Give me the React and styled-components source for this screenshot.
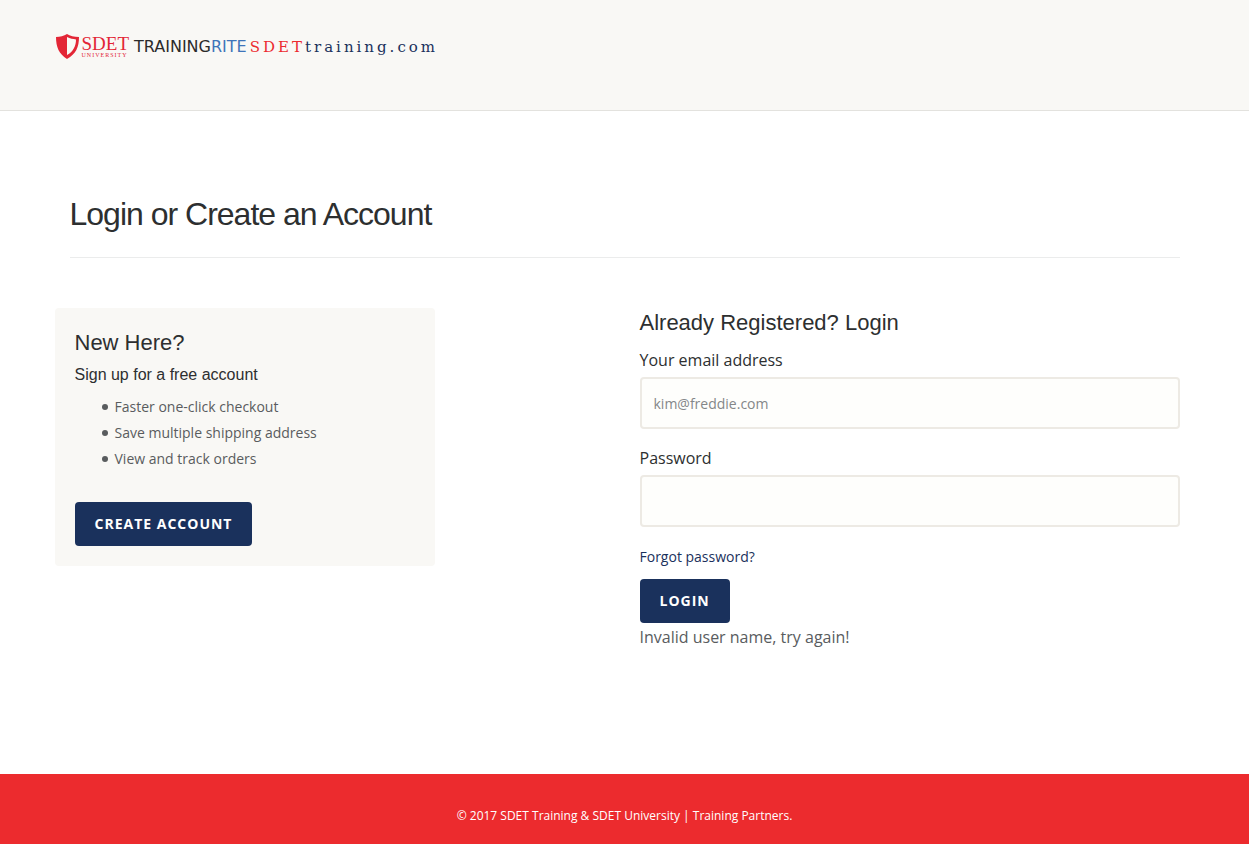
import React from "react";
import styled, { createGlobalStyle } from "styled-components";

const GlobalStyle = createGlobalStyle`
  *, *::before, *::after { box-sizing: border-box; }
  body {
    margin: 0;
    background: #fff;
    color: #595c5e;
    font: 16px/24px "Open Sans", sans-serif;
  }
  h1, h2, h3, p, ul { margin: 0; }
`;

const Page = styled.div`
  display: flex;
  flex-direction: column;
  min-height: 100vh;
`;

const Container = styled.div`
  width: 100%;
  max-width: 1140px;
  margin: 0 auto;
`;

const Header = styled.header`
  padding: 32px 0 48px;
  background: #f9f8f5;
  border-bottom: 1px solid #e3e2de;
`;

const Brand = styled.a`
  display: flex;
  align-items: center;
  width: fit-content;
  height: 30px;
  color: #1a315c;
  text-decoration: none;
  white-space: nowrap;
`;

const Shield = styled.svg`
  width: 24px;
  height: 26px;
  margin-right: 3px;
`;

const University = styled.span`
  display: flex;
  flex-direction: column;
  margin-right: 5px;
  color: #e32636;
  font-family: "Liberation Serif", serif;
`;

const UniversityName = styled.span`
  font-size: 19px;
  line-height: 17px;
`;

const UniversityTag = styled.span`
  font-size: 6px;
  line-height: 7px;
  letter-spacing: 1px;
`;

const TrainingRite = styled.span`
  margin-right: 3px;
  color: #2b2b2b;
  font: 16px/24px "DejaVu Sans", sans-serif;
`;

const Rite = styled.span`
  color: #3e74b9;
`;

const Domain = styled.span`
  font: 15px/24px "DejaVu Serif", serif;
  letter-spacing: 3px;
`;

const DomainAccent = styled.span`
  color: #ec2b2e;
`;

const Main = styled.main`
  flex: 1;
  padding: 80px 0;
`;

const PageTitle = styled.h1`
  margin: 0 15px 50px;
  padding: 3px 0 23px;
  border-bottom: 1px solid #ebecec;
  color: #2d2f30;
  font: 400 32px/40px "Liberation Sans", sans-serif;
  letter-spacing: -1px;
`;

const Columns = styled.div`
  display: grid;
  grid-template-columns: 1fr 1fr;
  align-items: start;
`;

const Card = styled.section`
  width: calc(100% * 2 / 3);
  padding: 20px;
  background: #f9f8f5;
  border-radius: 4px;
`;

const SectionTitle = styled.h2`
  color: #2d2f30;
  font: 400 22px/30px "Liberation Sans", sans-serif;
`;

const Subtitle = styled.h3`
  padding: 7px 0 9px;
  color: #2d2f30;
  font: 400 16px/20px "Liberation Sans", sans-serif;
`;

const Benefits = styled.ul`
  margin-bottom: 30px;
  padding-left: 27px;
  list-style: none;
  font-size: 14px;
  line-height: 26px;
`;

const Benefit = styled.li`
  display: flex;
  align-items: center;
  gap: 7px;
  &::before {
    content: "";
    width: 6px;
    height: 6px;
    border-radius: 50%;
    background: currentColor;
  }
`;

const Button = styled.button`
  display: block;
  height: 44px;
  padding: 0 20px;
  border: 0;
  border-radius: 4px;
  background: #1a315c;
  color: #fff;
  font: 700 14px/24px "Open Sans", sans-serif;
  letter-spacing: 1px;
  text-transform: uppercase;
  cursor: pointer;
`;

const LoginForm = styled.form`
  padding: 0 15px;
`;

const Fields = styled.div`
  padding-top: 10px;
`;

const Field = styled.div`
  display: flex;
  flex-direction: column;
  gap: 5px;
  margin-bottom: 17px;
`;

const Label = styled.label`
  color: #2d2f30;
`;

const Input = styled.input`
  width: 100%;
  height: 52px;
  padding: 0 12px;
  border: 2px solid #edeae4;
  border-radius: 4px;
  background: #fefefc;
  color: #2d2f30;
  font: 14px/24px "Open Sans", sans-serif;
  &::placeholder { color: #848789; opacity: 1; }
`;

const ForgotLink = styled.a`
  display: inline-block;
  margin-bottom: 10px;
  color: #1a315c;
  font-size: 14px;
  text-decoration: none;
`;

const Message = styled.p`
  line-height: 28px;
`;

const Footer = styled.footer`
  padding: 30px 0 16px;
  background: #ec2b2e;
  color: #fff;
  font-size: 12px;
  text-align: center;
`;

function TextField({ id, label, ...rest }) {
  return (
    <Field>
      <Label htmlFor={id}>{label}</Label>
      <Input id={id} name={id} {...rest} />
    </Field>
  );
}

export default function App() {
  return (
    <>
      <GlobalStyle />
      <Page>
        <Header>
          <Container>
            <Brand href="#">
              <Shield viewBox="0 0 24 26" aria-hidden="true">
                <path
                  d="M1 3C5 3 9 2 12 0c3 2 7 3 12 3 0 10-3 17-12 22C4 20 1 13 1 3Z"
                  fill="#e32636"
                />
                <path
                  d="M12 3c3 1.500 6 2 9 2.500C21 12 18 18 12 21Z"
                  fill="#f9f8f5"
                />
              </Shield>
              <University>
                <UniversityName>SDET</UniversityName>
                <UniversityTag>UNIVERSITY</UniversityTag>
              </University>
              <TrainingRite>
                TRAINING<Rite>RITE</Rite>
              </TrainingRite>
              <Domain>
                <DomainAccent>SDET</DomainAccent>training.com
              </Domain>
            </Brand>
          </Container>
        </Header>
        <Main>
          <Container>
            <PageTitle>Login or Create an Account</PageTitle>
            <Columns>
              <Card>
                <SectionTitle>New Here?</SectionTitle>
                <Subtitle>Sign up for a free account</Subtitle>
                <Benefits>
                  <Benefit>Faster one-click checkout</Benefit>
                  <Benefit>Save multiple shipping address</Benefit>
                  <Benefit>View and track orders</Benefit>
                </Benefits>
                <Button type="button">Create Account</Button>
              </Card>
              <LoginForm onSubmit={(event) => event.preventDefault()}>
                <SectionTitle>Already Registered? Login</SectionTitle>
                <Fields>
                  <TextField
                    id="email"
                    label="Your email address"
                    type="email"
                    placeholder="kim@freddie.com"
                  />
                  <TextField id="password" label="Password" type="password" />
                </Fields>
                <ForgotLink href="#">Forgot password?</ForgotLink>
                <Button type="submit">Login</Button>
                <Message role="alert">Invalid user name, try again!</Message>
              </LoginForm>
            </Columns>
          </Container>
        </Main>
        <Footer>
          © 2017 SDET Training &amp; SDET University | Training Partners.
        </Footer>
      </Page>
    </>
  );
}
